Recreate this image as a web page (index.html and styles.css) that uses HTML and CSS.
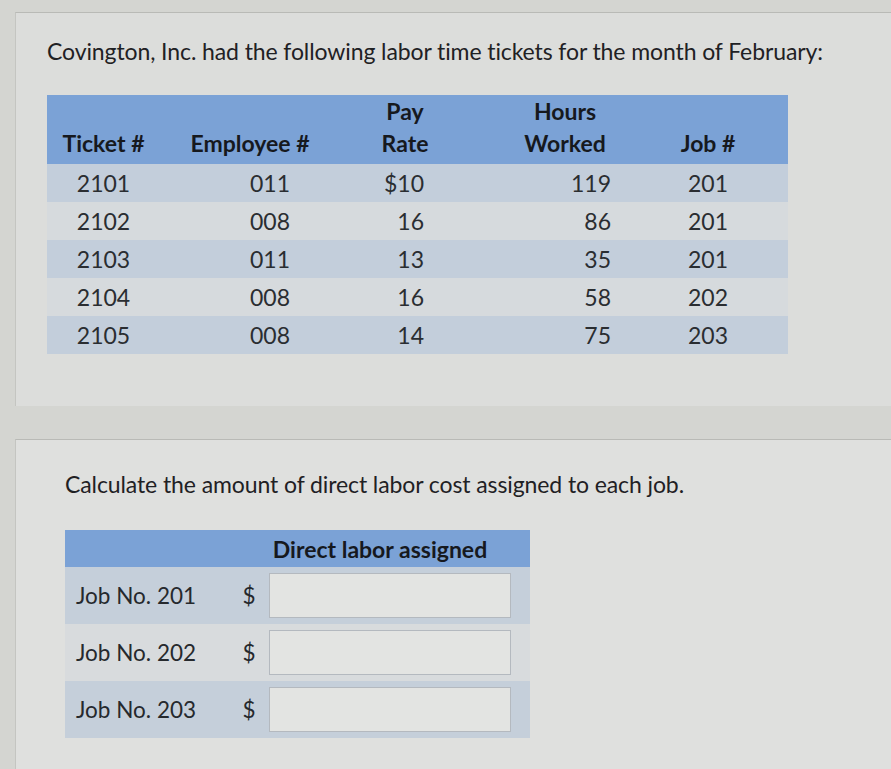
FILE: index.html
```
<!DOCTYPE html>
<html>
<head>
<meta charset="utf-8">
<link rel="stylesheet" href="styles.css">
</head>
<body>
<div class="top-strip"></div>
<section class="panel panel-one">
  <p class="prompt title">Covington, Inc. had the following labor time tickets for the month of February:</p>
  <table class="tickets">
    <colgroup>
      <col class="c1"><col class="c2"><col class="c3"><col class="c4"><col class="c5">
    </colgroup>
    <thead>
      <tr>
        <th class="center">Ticket #</th>
        <th class="center">Employee #</th>
        <th class="center">Pay<br>Rate</th>
        <th class="center hours">Hours<br>Worked</th>
        <th class="center job">Job #</th>
      </tr>
    </thead>
    <tbody>
      <tr class="shade"><td class="center">2101</td><td class="emp">011</td><td class="rate">$10</td><td class="hrs">119</td><td class="center job">201</td></tr>
      <tr><td class="center">2102</td><td class="emp">008</td><td class="rate">16</td><td class="hrs">86</td><td class="center job">201</td></tr>
      <tr class="shade"><td class="center">2103</td><td class="emp">011</td><td class="rate">13</td><td class="hrs">35</td><td class="center job">201</td></tr>
      <tr><td class="center">2104</td><td class="emp">008</td><td class="rate">16</td><td class="hrs">58</td><td class="center job">202</td></tr>
      <tr class="shade"><td class="center">2105</td><td class="emp">008</td><td class="rate">14</td><td class="hrs">75</td><td class="center job">203</td></tr>
    </tbody>
  </table>
</section>
<section class="panel panel-two">
  <p class="prompt question">Calculate the amount of direct labor cost assigned to each job.</p>
  <table class="answers">
    <colgroup>
      <col class="a1"><col class="a2"><col class="a3">
    </colgroup>
    <thead>
      <tr><th></th><th></th><th class="dl">Direct labor assigned</th></tr>
    </thead>
    <tbody>
      <tr class="shade"><td class="label">Job No. 201</td><td class="dollar">$</td><td class="field"><span class="box"></span></td></tr>
      <tr><td class="label">Job No. 202</td><td class="dollar">$</td><td class="field"><span class="box"></span></td></tr>
      <tr class="shade"><td class="label">Job No. 203</td><td class="dollar">$</td><td class="field"><span class="box"></span></td></tr>
    </tbody>
  </table>
</section>
</body>
</html>
```
FILE: styles.css
```
html, body {
  margin: 0;
  padding: 0;
}
body {
  background: #d4d5d1;
  font-family: Lato, "Open Sans", sans-serif;
  color: #1f2124;
  width: 891px;
  height: 769px;
  overflow: hidden;
}
.top-strip {
  height: 12px;
}
.panel {
  margin-left: 15px;
  border-top: 1px solid #b9bab6;
  border-left: 1px solid #c4c5c1;
  background: #dcdddb;
}
.panel-one {
  height: 394px;
  padding-left: 31px;
  box-sizing: border-box;
  padding-top: 24px;
}
.prompt {
  margin: 0;
  font-size: 23px;
  line-height: 28px;
  letter-spacing: -0.1px;
}
.tickets {
  margin-top: 30px;
  border-collapse: collapse;
  table-layout: fixed;
  width: 741px;
  font-size: 23px;
}
.tickets .c1 { width: 113px; }
.tickets .c2 { width: 180px; }
.tickets .c3 { width: 130px; }
.tickets .c4 { width: 170px; }
.tickets .c5 { width: 148px; }
.tickets thead tr {
  background: #7ba2d6;
}
.tickets th {
  font-size: 23px;
  font-weight: 700;
  line-height: 32px;
  padding: 0 0 5px 0;
  vertical-align: bottom;
  height: 64px;
  color: #16191e;
}
.tickets td {
  height: 38px;
  padding: 0;
  line-height: 38px;
  color: #2a2d31;
}
.tickets tbody tr {
  background: #d6dadd;
}
.tickets tbody tr.shade {
  background: #c3cedb;
}
.center { text-align: center; }
.tickets th.hours { padding-left: 20px; }
.tickets .job { padding-right: 12px; }
.tickets td.emp { text-align: right; padding-right: 50px; }
.tickets td.rate { text-align: right; padding-right: 46px; }
.tickets td.hrs { text-align: right; padding-right: 29px; }

.panel-two {
  margin-top: 33px;
  height: 340px;
  padding-left: 49px;
  padding-top: 30px;
  box-sizing: border-box;
  background: #dfe0de;
}
.answers {
  margin-top: 32px;
  border-collapse: collapse;
  table-layout: fixed;
  width: 465px;
  font-size: 22.5px;
}
.answers .a1 { width: 165px; }
.answers .a2 { width: 38px; }
.answers .a3 { width: 262px; }
.answers thead tr {
  background: #7ba2d6;
}
.answers th {
  height: 37px;
  padding: 0;
  font-weight: 700;
  font-size: 23px;
  color: #16191e;
}
.answers th.dl {
  text-align: center;
  padding-right: 38px;
}
.answers tbody tr {
  background: #d8dbdd;
}
.answers tbody tr.shade {
  background: #c5cfda;
}
.answers td {
  height: 57px;
  padding: 0;
}
.answers td.label {
  padding-left: 11px;
  color: #26292d;
}
.answers td.dollar {
  text-align: center;
  color: #26292d;
}
.answers td.field {
  padding-right: 19px;
}
.box {
  display: block;
  height: 43px;
  margin-left: 1px;
  background: #e3e4e2;
  border: 1px solid #b4b9bf;
}
```
